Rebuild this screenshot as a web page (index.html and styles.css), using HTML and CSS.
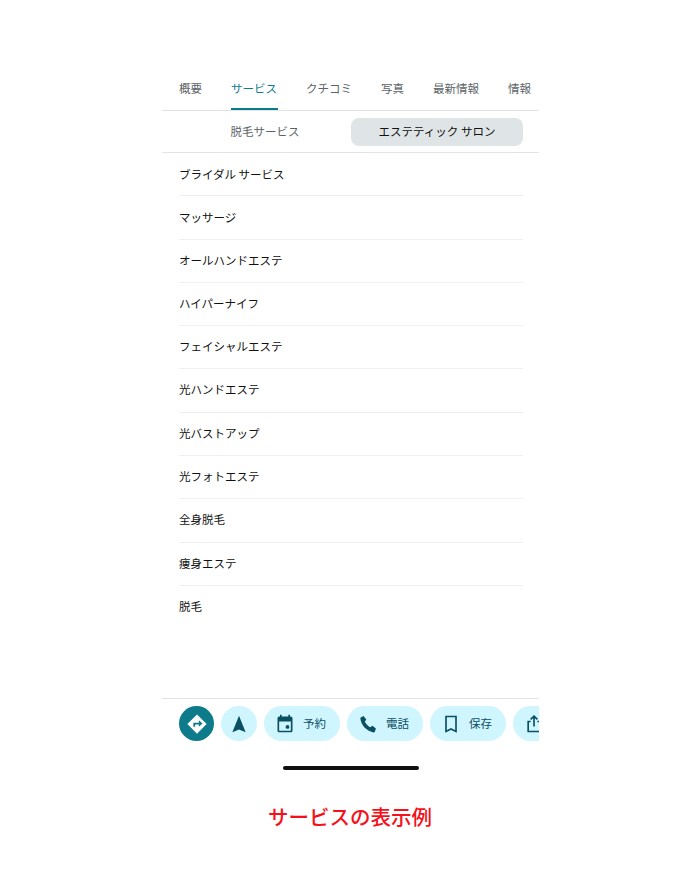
FILE: index.html
```html
<!DOCTYPE html>
<html lang="ja">
<head>
  <meta charset="UTF-8">
  <title>サービスの表示例</title>
  <link rel="stylesheet" href="styles.css">
</head>
<body>
  <div class="phone">
    <div class="tabs">
      <span class="tab">概要</span>
      <span class="tab active">サービス</span>
      <span class="tab">クチコミ</span>
      <span class="tab">写真</span>
      <span class="tab">最新情報</span>
      <span class="tab">情報</span>
    </div>

    <div class="segments">
      <div class="segment">脱毛サービス</div>
      <div class="segment selected">エステティック サロン</div>
    </div>

    <ul class="services">
      <li>ブライダル サービス</li>
      <li>マッサージ</li>
      <li>オールハンドエステ</li>
      <li>ハイパーナイフ</li>
      <li>フェイシャルエステ</li>
      <li>光ハンドエステ</li>
      <li>光バストアップ</li>
      <li>光フォトエステ</li>
      <li>全身脱毛</li>
      <li>痩身エステ</li>
      <li>脱毛</li>
    </ul>

    <div class="actions">
      <div class="round primary">
        <svg width="22" height="22" viewBox="0 0 24 24"><path fill="#fff" d="M12 1.500 22.500 12 12 22.500 1.500 12z"/><path fill="none" stroke="#0e7b8b" stroke-width="2" d="M9 15v-3.500h6"/><path fill="#0e7b8b" d="M14 8l4 3.500-4 3.500z"/></svg>
      </div>
      <div class="round">
        <svg width="20" height="20" viewBox="0 0 24 24"><path fill="#0b4f63" d="M12 2 20 22 12 18.500 4 22z"/></svg>
      </div>
      <div class="chip">
        <svg width="20" height="20" viewBox="0 0 24 24"><path fill="#0b4f63" d="M6 1h2v2h8V1h2v2h1a2 2 0 0 1 2 2v15a2 2 0 0 1-2 2H5a2 2 0 0 1-2-2V5a2 2 0 0 1 2-2h1zM5 9v11h14V9z"/><circle fill="#0b4f63" cx="15" cy="15.500" r="2.300"/></svg>
        <span>予約</span>
      </div>
      <div class="chip">
        <svg width="20" height="20" viewBox="0 0 24 24"><path fill="#0b4f63" d="M6.600 2.500 10 6.600 8.200 9.400c1.200 2.600 3.800 5.200 6.400 6.400l2.800-1.800 4.100 3.400-1.300 3.800c-.3.700-1 1.100-1.700 1C9.800 20 4 14.200 2.800 5.500c-.1-.7.300-1.400 1-1.700z"/></svg>
        <span>電話</span>
      </div>
      <div class="chip">
        <svg width="20" height="20" viewBox="0 0 24 24"><path fill="none" stroke="#0b4f63" stroke-width="2" d="M6 3h12v18l-6-3-6 3z"/></svg>
        <span>保存</span>
      </div>
      <div class="chip">
        <svg width="20" height="20" viewBox="0 0 24 24"><path fill="none" stroke="#0b4f63" stroke-width="2" d="M8 9H5v12h14V9h-3M12 15V3M8 6.500 12 2.500l4 4"/></svg>
      </div>
    </div>

    <div class="home-bar"></div>
  </div>

  <p class="caption">サービスの表示例</p>
</body>
</html>
```

FILE: styles.css
```css
body { margin: 0; background: #fff; font-family: "Noto Sans CJK JP", "Noto Sans", sans-serif; }
.phone { width: 377px; margin: 0 0 0 162px; padding-top: 72px; }

.tabs { display: flex; gap: 29px; height: 38px; padding-left: 17px; border-bottom: 1px solid #e2e5e5; overflow: hidden; }
.tab { height: 38px; box-sizing: border-box; padding-top: 8px; font-size: 11.500px; line-height: 17px; color: #5c6366; white-space: nowrap; }
.tab.active { width: 47px; color: #0e7b8b; border-bottom: 2px solid #0e7b8b; }
.tab.active + .tab { margin-left: -1px; }

.segments { display: grid; grid-template-columns: 1fr 1fr; height: 41px; padding: 0 16px 0 17px; align-items: center; border-bottom: 1px solid #e2e5e5; }
.segment { height: 28px; border-radius: 8px; font-size: 11.500px; line-height: 27px; text-align: center; color: #5c6366; }
.segment.selected { background: #dfe5e6; color: #111; }

.services { list-style: none; margin: 0; padding: 0 16px 0 17px; height: 545px; }
.services li { height: 42.300px; border-bottom: 1px solid #eef0f0; font-size: 11.500px; line-height: 42px; color: #111; }
.services li:nth-child(n+3) { line-height: 41px; }
.services li:last-child { border-bottom: none; }

.actions { display: flex; gap: 7px; height: 35px; padding: 7px 0 0 17px; border-top: 1px solid #e2e5e5; overflow: hidden; }
.round { flex: none; display: flex; align-items: center; justify-content: center; width: 36px; height: 35px; border-radius: 50%; background: #cff5ff; }
.round.primary { width: 35px; background: #0e7b8b; }
.chip { flex: none; display: flex; align-items: center; gap: 8px; width: 76px; height: 35px; box-sizing: border-box; padding-left: 11px; border-radius: 18px; background: #cff5ff; font-size: 11.500px; color: #0b4f63; }
.chip span { padding-bottom: 2px; }

.home-bar { width: 136px; height: 4px; margin: 25px 0 0 121px; border-radius: 2px; background: #111; }

.caption { margin: 31px 0 0; text-align: center; font-size: 20.500px; font-weight: 500; line-height: 30px; color: #f5111b; }
```
